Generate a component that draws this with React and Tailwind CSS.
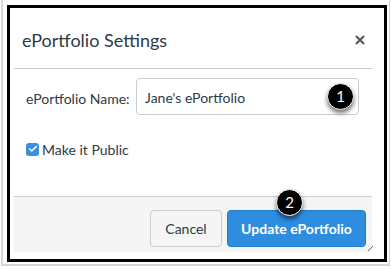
import { Check } from 'lucide-react';

const Badge = ({ n, className }) => (
  <div
    className={`absolute w-[27px] h-[27px] rounded-full bg-black border border-white text-white text-[15px] flex items-center justify-center shadow-[0_3px_4px_rgba(0,0,0,0.55)] ${className}`}
  >
    {n}
  </div>
);

export default function App() {
  return (
    <div className="w-[391px] h-[269px] bg-white font-['Lato',sans-serif] text-[#2d3b45] relative overflow-hidden">
      {/* outer screenshot frame */}
      <div className="ml-px w-[389px] h-[266px] border-l-2 border-r border-b-2 border-[#d6d6d6] pl-[4px] pt-[5px]">
        <div className="w-[380px] h-[257px] border-[3px] border-black pl-[4px] pr-[12px] relative">
          {/* header */}
          <div className="h-[61px] flex items-center justify-between border-b border-[#c7cdd1] pl-[8px] pr-[7px] pt-[3px]">
            <h1 className="text-[18px] leading-none">ePortfolio Settings</h1>
            <svg width="10" height="10" viewBox="0 0 10 10" className="text-[#555]">
              <path d="M1 1 L9 9 M9 1 L1 9" stroke="currentColor" strokeWidth="2" />
            </svg>
          </div>

          {/* body */}
          <div className="h-[127px] pl-[12px] pt-[9px] relative">
            <div className="flex items-start">
              <label className="text-[14px] w-[110px] pt-[10px]">ePortfolio Name:</label>
              <div className="w-[223px] h-[37px] border border-[#c7cdd1] rounded-[4px] flex items-center pl-[8px] text-[14px] pt-[1px]">
                Jane's ePortfolio
              </div>
            </div>
            <div className="flex items-center gap-[3px] mt-[23px]">
              <div className="w-[13px] h-[13px] rounded-[3px] bg-[#3b8fe3] flex items-center justify-center">
                <Check size={10} strokeWidth={3.5} className="text-white" />
              </div>
              <span className="text-[14px] pt-px">Make it Public</span>
            </div>
            <Badge n="1" className="left-[313px] top-[14px]" />
          </div>

          {/* footer */}
          <div className="h-[56px] bg-[#f5f5f5] border-t border-[#c7cdd1] flex items-start justify-end gap-[5px] pt-[13px] pr-[6px] relative">
            <button className="w-[72px] h-[37px] bg-[#f5f5f5] border border-[#c7cdd1] rounded-[4px] text-[14px] text-[#2d3b45]">
              Cancel
            </button>
            <button className="w-[139px] h-[37px] bg-[#2f8de0] border border-[#1f7ccd] rounded-[4px] text-[14px] font-bold text-white">
              Update ePortfolio
            </button>
            <Badge n="2" className="left-[262px] top-[-8px]" />
          </div>

          {/* resize grip */}
          <svg width="5" height="5" viewBox="0 0 5 5" className="absolute right-[11px] bottom-[8px]">
            <path d="M0 5 L5 0" stroke="#666" strokeWidth="1" />
          </svg>
        </div>
      </div>
    </div>
  );
}
